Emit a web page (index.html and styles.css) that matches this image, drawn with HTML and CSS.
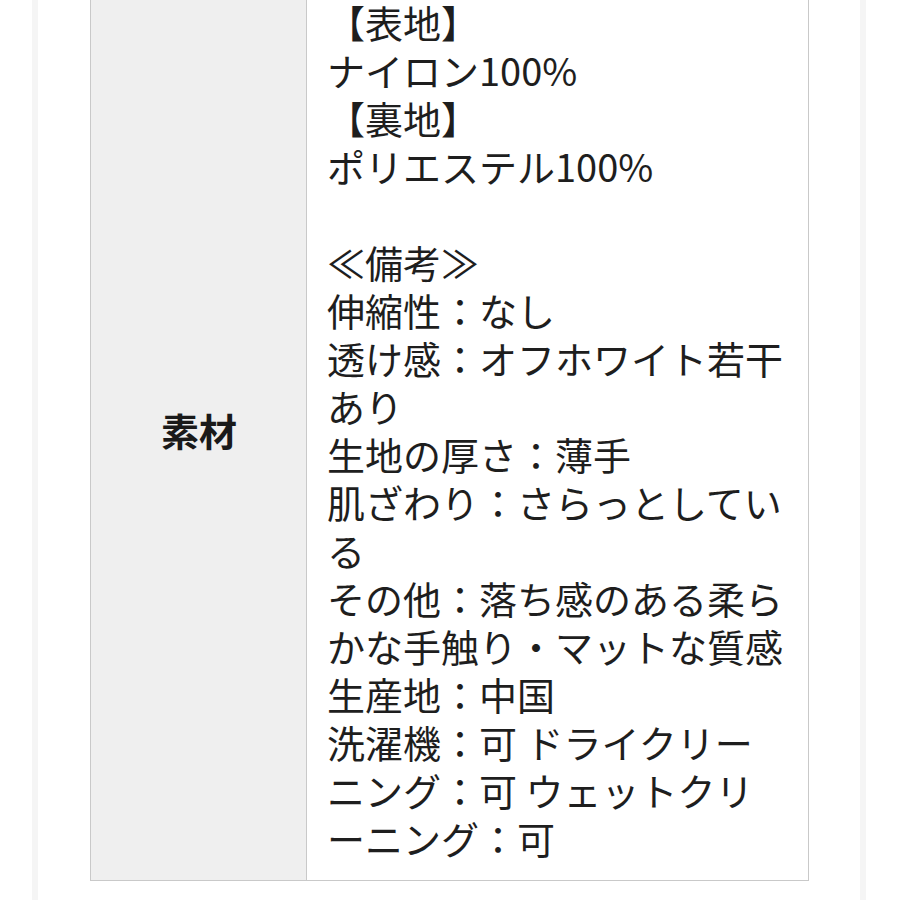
FILE: index.html
```html
<!DOCTYPE html>
<html lang="ja">
<head>
<meta charset="utf-8">
<link rel="stylesheet" href="styles.css">
</head>
<body>
<div class="page">
  <table class="spec">
    <tr>
      <th class="label">素材</th>
      <td class="value">【表地】<br>ナイロン100%<br>【裏地】<br>ポリエステル100%<br><br>≪備考≫<br>伸縮性：なし<br>透け感：オフホワイト若干あり<br>生地の厚さ：薄手<br>肌ざわり：さらっとしている<br>その他：落ち感のある柔らかな手触り・マットな質感<br>生産地：中国<br>洗濯機：可 ドライクリーニング：可 ウェットクリーニング：可</td>
    </tr>
  </table>
</div>
</body>
</html>
```

FILE: styles.css
```css
html, body {
  margin: 0;
  padding: 0;
  background: #ffffff;
}

body {
  font-family: "Noto Sans CJK JP", "Noto Sans", sans-serif;
  color: #1e1e1e;
  overflow: hidden;
}

.page {
  margin: 0 34px 0 32px;
  border-left: 6px solid #f5f5f5;
  border-right: 6px solid #f5f5f5;
  padding: 0 51px 0 52px;
  min-height: 960px;
  box-sizing: border-box;
}

.spec {
  width: 719px;
  margin-top: -23px;
  border-collapse: collapse;
  border: 1px solid #c9c9c9;
}

.label {
  width: 174px;
  background: #efefef;
  border-right: 1px solid #c9c9c9;
  font-size: 38px;
  font-weight: bold;
  text-align: center;
  vertical-align: middle;
  padding: 0 20px 0 21px;
  color: #1a1a1a;
}

.value {
  font-size: 38px;
  line-height: 48px;
  padding: 20px 20px 18px 20px;
  vertical-align: top;
  line-break: loose;
  background: #ffffff;
}
```
